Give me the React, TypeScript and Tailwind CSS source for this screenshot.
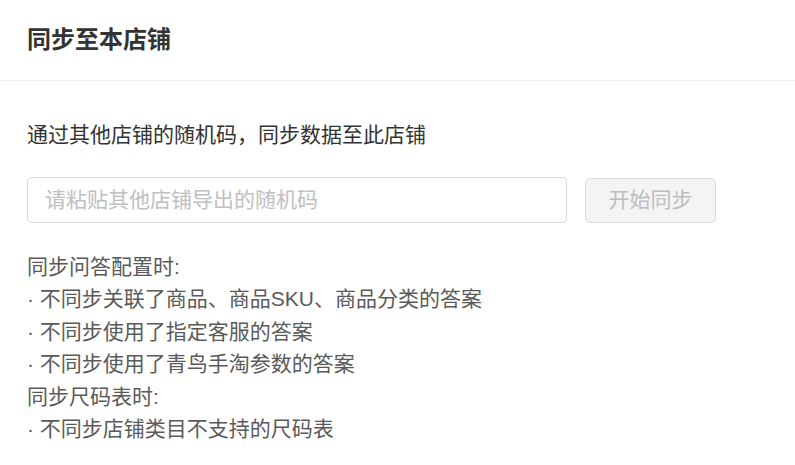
const notes = [
  "同步问答配置时:",
  "· 不同步关联了商品、商品SKU、商品分类的答案",
  "· 不同步使用了指定客服的答案",
  "· 不同步使用了青鸟手淘参数的答案",
  "同步尺码表时:",
  "· 不同步店铺类目不支持的尺码表",
];

export default function App() {
  return (
    <div className="h-[465px] w-[795px] overflow-hidden bg-white font-['Liberation_Sans','Noto_Sans_CJK_SC',sans-serif]">
      <div className="flex h-[81px] items-center border-b border-[#ededed] px-[27px]">
        <h1 className="text-[24px] leading-none font-bold text-[#333]">同步至本店铺</h1>
      </div>

      <div className="px-[27px]">
        <p className="mt-[39px] text-[21px] leading-[30px] text-[#333]">
          通过其他店铺的随机码，同步数据至此店铺
        </p>

        <div className="mt-[27px] flex items-center gap-[18px]">
          <input
            className="h-[46px] w-[540px] rounded-[5px] border border-[#d9d9d9] px-[17px] text-[21px] text-[#333] outline-none placeholder:text-[#c0c0c0]"
            placeholder="请粘贴其他店铺导出的随机码"
          />
          <button
            disabled
            className="h-[45px] w-[131px] rounded-[5px] border border-[#dcdcdc] bg-[#f4f4f4] text-[21px] text-[#bdbdbd]"
          >
            开始同步
          </button>
        </div>

        <div className="mt-[28px] text-[21px] leading-[32.4px] text-[#5a5a5a]">
          {notes.map((line) => (
            <div key={line}>{line}</div>
          ))}
        </div>
      </div>
    </div>
  );
}
